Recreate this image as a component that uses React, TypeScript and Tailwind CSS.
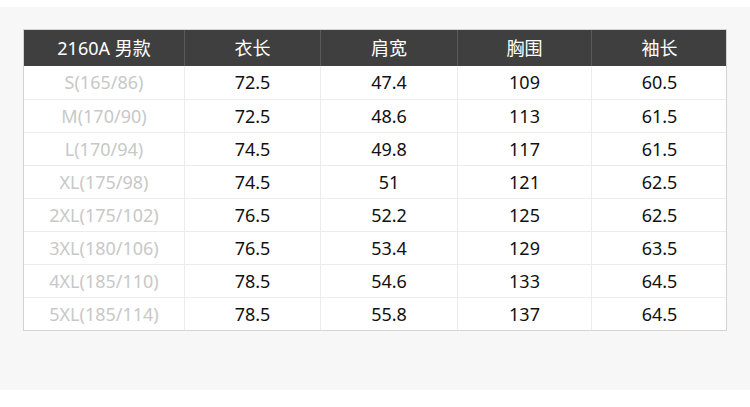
const headers = ["2160A 男款", "衣长", "肩宽", "胸围", "袖长"];

const rows: string[][] = [
  ["S(165/86)", "72.5", "47.4", "109", "60.5"],
  ["M(170/90)", "72.5", "48.6", "113", "61.5"],
  ["L(170/94)", "74.5", "49.8", "117", "61.5"],
  ["XL(175/98)", "74.5", "51", "121", "62.5"],
  ["2XL(175/102)", "76.5", "52.2", "125", "62.5"],
  ["3XL(180/106)", "76.5", "53.4", "129", "63.5"],
  ["4XL(185/110)", "78.5", "54.6", "133", "64.5"],
  ["5XL(185/114)", "78.5", "55.8", "137", "64.5"],
];

const cols = "grid grid-cols-[160px_136px_137px_134px_136px]";

export default function App() {
  return (
    <div
      className="w-[750px] h-[407px] bg-white pt-[7px]"
      style={{ fontFamily: '"Noto Sans", "Noto Sans CJK SC", sans-serif' }}
    >
      <div className="h-[383px] bg-[#f7f7f7] pt-[22px] pl-[23px]">
        <div className="w-[704px] border border-[#d4d4d4] bg-white">
          <div className={`${cols} h-[36px] bg-[#3f3f3f] text-white text-[18px]`}>
            {headers.map((h, i) => (
              <div
                key={h}
                className={`flex items-center justify-center ${i > 0 ? "border-l border-[#5a5a5a]" : ""}`}
              >
                {h}
              </div>
            ))}
          </div>
          {rows.map((r, ri) => (
            <div
              key={r[0]}
              className={`${cols} h-[33px] text-[18px] ${ri > 0 ? "border-t border-[#ececec]" : ""}`}
            >
              {r.map((c, i) => (
                <div
                  key={i}
                  className={`flex items-center justify-center ${i > 0 ? "border-l border-[#ececec] text-[#111]" : "text-[#c8c8c8]"}`}
                >
                  {c}
                </div>
              ))}
            </div>
          ))}
        </div>
      </div>
    </div>
  );
}
